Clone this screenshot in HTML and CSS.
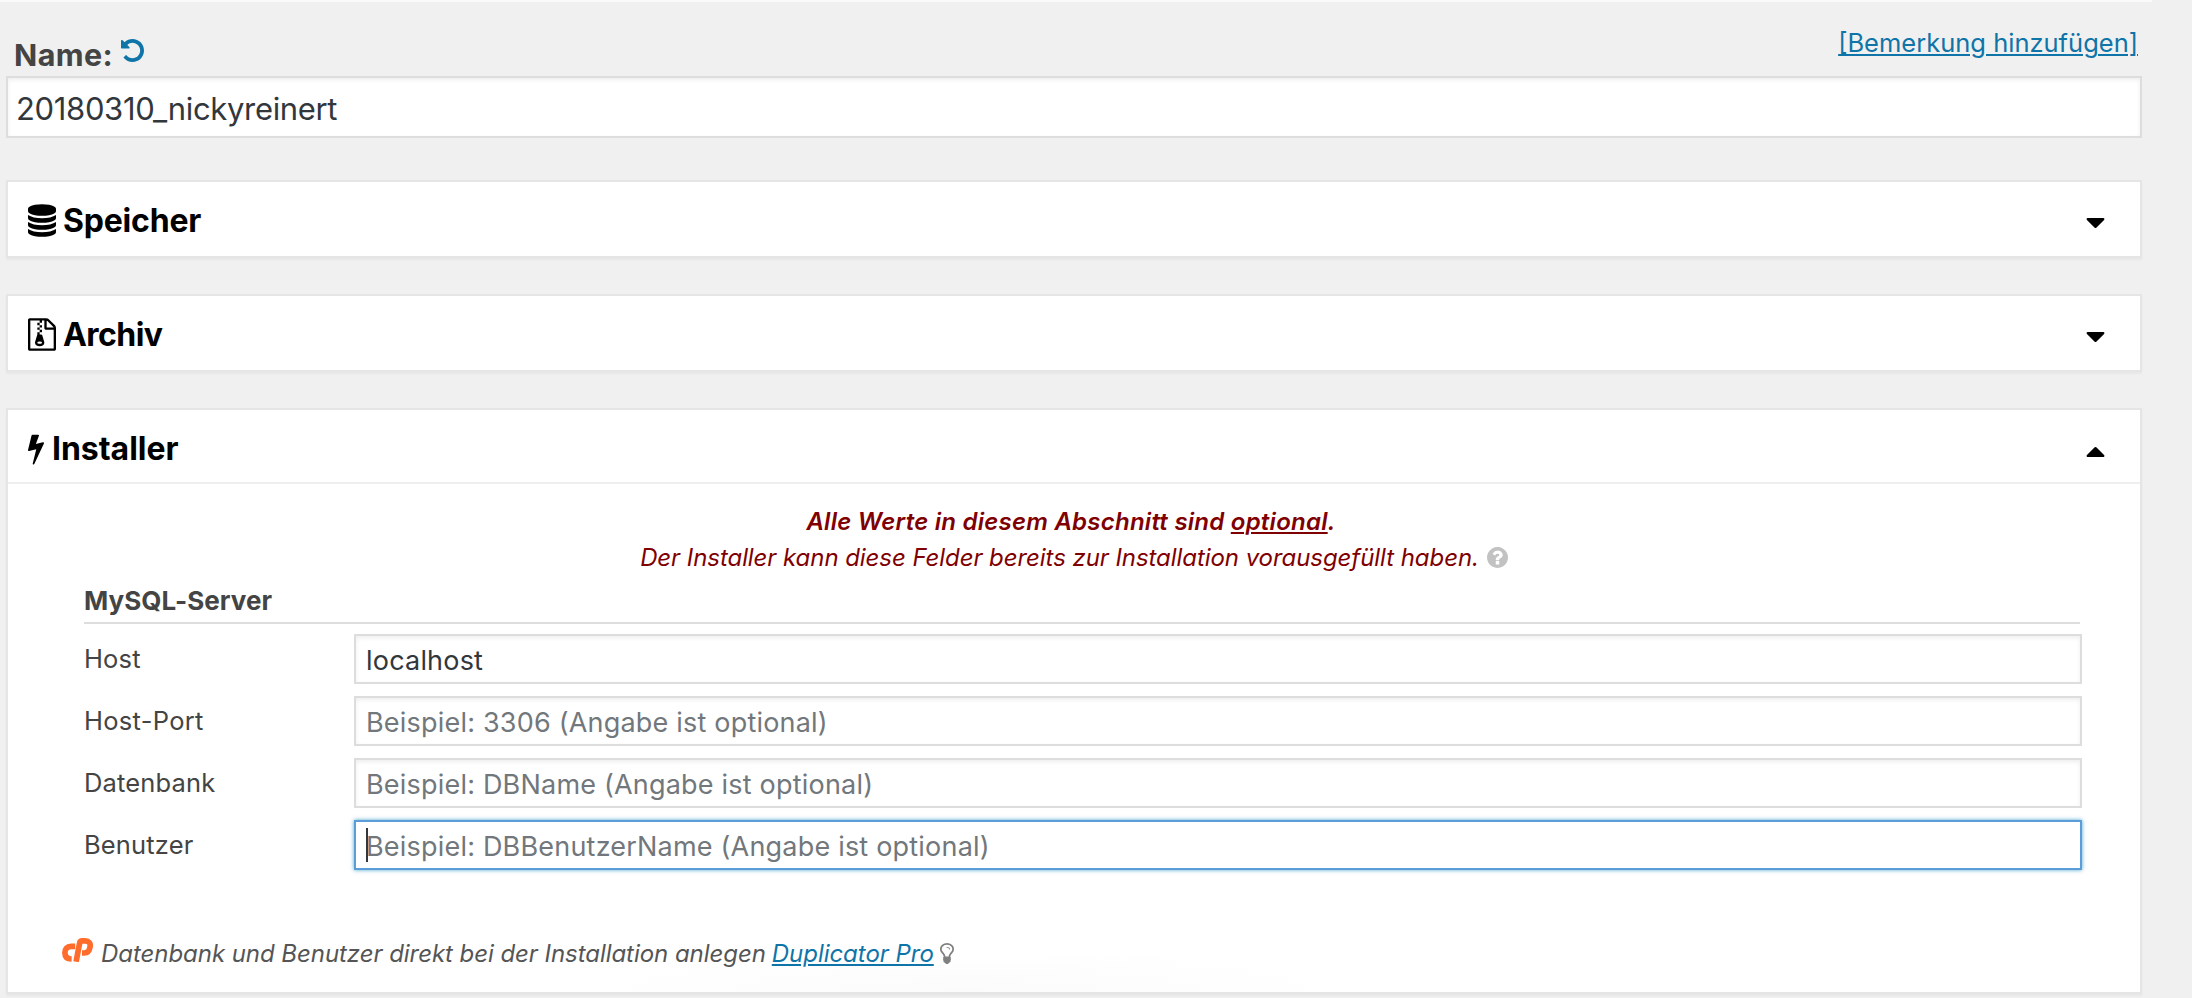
FILE: index.html
```html
<!DOCTYPE html>
<html lang="de">
<head>
<meta charset="utf-8">
<title>Paket erstellen</title>
<link rel="stylesheet" href="styles.css">
</head>
<body>
<main class="page">
  <header class="name-bar">
    <label class="name-label" for="name">Name:</label>
    <svg class="icon-undo" viewBox="128 128 1536 1536"><path d="M1664 896q0 156-61 298t-164 245-245 164-298 61q-172 0-327-72.5t-264-204.5q-7-10-6.5-22.5t8.5-20.5l137-138q10-9 25-9 16 2 23 12 73 95 179 147t225 52q104 0 198.5-40.5t163.5-109.5 109.5-163.5 40.5-198.5-40.5-198.5-109.5-163.5-163.5-109.5-198.5-40.5q-98 0-188 35.5t-160 101.5l137 138q31 30 14 69-17 40-59 40h-448q-26 0-45-19t-19-45v-448q0-42 40-59 39-17 69 14l130 129q107-101 244.5-156.5t284.5-55.5q156 0 298 61t245 164 164 245 61 298z"/></svg>
    <a class="link note-link">[Bemerkung hinzufügen]</a>
  </header>
  <input class="input name-input" id="name" type="text" value="20180310_nickyreinert">

  <section class="panel">
    <div class="panel-head">
      <svg class="head-icon" viewBox="128 0 1536 1792"><path d="M896 768q237 0 443-43t325-127v170q0 69-103 128t-280 93.5-385 34.5-385-34.5-280-93.5-103-128v-170q119 84 325 127t443 43zm0 768q237 0 443-43t325-127v170q0 69-103 128t-280 93.5-385 34.5-385-34.5-280-93.5-103-128v-170q119 84 325 127t443 43zm0-384q237 0 443-43t325-127v170q0 69-103 128t-280 93.5-385 34.5-385-34.5-280-93.5-103-128v-170q119 84 325 127t443 43zm0-1152q208 0 385 34.5t280 93.5 103 128v128q0 69-103 128t-280 93.5-385 34.5-385-34.5-280-93.5-103-128v-128q0-69 103-128t280-93.5 385-34.5z"/></svg>
      <h2 class="panel-title">Speicher</h2>
      <svg class="caret" viewBox="384 640 1024 576"><path d="M1408 704q0 26-19 45l-448 448q-19 19-45 19t-45-19l-448-448q-19-19-19-45t19-45 45-19h896q26 0 45 19t19 45z"/></svg>
    </div>
  </section>

  <section class="panel">
    <div class="panel-head">
      <svg class="head-icon" viewBox="0 0 1536 1792"><path d="M640 384v-128h-128v128h128zm128 128v-128h-128v128h128zm-128 128v-128h-128v128h128zm128 128v-128h-128v128h128zm700-388q28 28 48 76t20 88v1152q0 40-28 68t-68 28h-1344q-40 0-68-28t-28-68v-1600q0-40 28-68t68-28h896q40 0 88 20t76 48zm-444-244v376h376q-10-29-22-41l-313-313q-12-12-41-22zm384 1528v-1024h-416q-40 0-68-28t-28-68v-416h-128v128h-128v-128h-512v1536h1280zm-627-721l107 349q8 27 8 52 0 83-72.5 137.5t-183.5 54.5-183.5-54.5-72.5-137.5q0-25 8-52 21-63 120-396v-128h128v128h79q22 0 39 13t23 34zm-141 465q53 0 90.5-19t37.5-45-37.5-45-90.5-19-90.5 19-37.5 45 37.5 45 90.5 19z"/></svg>
      <h2 class="panel-title title-archive">Archiv</h2>
      <svg class="caret" viewBox="384 640 1024 576"><path d="M1408 704q0 26-19 45l-448 448q-19 19-45 19t-45-19l-448-448q-19-19-19-45t19-45 45-19h896q26 0 45 19t19 45z"/></svg>
    </div>
  </section>

  <section class="panel panel-open">
    <div class="panel-head head-open">
      <svg class="head-icon icon-bolt" viewBox="448 0 896 1792"><path d="M1333 566q18 20 7 44l-540 1157q-13 25-42 25-4 0-14-2-17-5-25.5-19t-4.5-30l197-808-406 101q-4 1-12 1-18 0-31-11-18-15-13-39l201-825q4-16 14-26t28-10h328q19 0 32 12.5t13 29.5q0 8-5 18l-171 463 396-98q8-2 12-2 19 0 34 15z"/></svg>
      <h2 class="panel-title title-installer">Installer</h2>
      <svg class="caret caret-up" viewBox="384 640 1024 576"><path d="M1408 1152q0 26-19 45t-45 19h-896q-26 0-45-19t-19-45 19-45l448-448q19-19 45-19t45 19l448 448q19 19 19 45z"/></svg>
    </div>
    <div class="panel-body">
      <p class="notice notice-strong">Alle Werte in diesem Abschnitt sind <u class="underlined">optional</u>.</p>
      <p class="notice"><span>Der Installer kann diese Felder bereits zur Installation vorausgefüllt haben.</span>
        <svg class="icon-help" viewBox="128 128 1536 1536"><path d="M1024 1376v-192q0-14-9-23t-23-9h-192q-14 0-23 9t-9 23v192q0 14 9 23t23 9h192q14 0 23-9t9-23zm256-672q0-88-55.5-163t-138.5-116-170-41q-243 0-371 213-15 24 8 42l132 100q7 6 19 6 16 0 25-12 53-68 86-92 34-24 86-24 48 0 85.5 26t37.5 59q0 38-20 61t-68 45q-63 28-115.5 86.5t-52.5 125.5v36q0 14 9 23t23 9h192q14 0 23-9t9-23q0-19 21.5-49.5t54.5-49.5q32-18 49-28.5t46-35 44.5-48 28-60.5 12.5-81zm384 192q0 209-103 385.5t-279.5 279.5-385.5 103-385.5-103-279.5-279.5-103-385.5 103-385.5 279.5-279.5 385.5-103 385.5 103 279.5 279.5 103 385.5z"/></svg>
      </p>
      <h3 class="group-title"><span>MySQL-Server</span></h3>
      <div class="fields">
        <label class="field-label" for="host">Host</label>
        <div class="field"><input class="input" id="host" type="text" value="localhost"></div>
        <label class="field-label label-port" for="port">Host-Port</label>
        <div class="field"><input class="input" id="port" type="text" placeholder="Beispiel: 3306 (Angabe ist optional)"></div>
        <label class="field-label" for="db">Datenbank</label>
        <div class="field"><input class="input" id="db" type="text" placeholder="Beispiel: DBName (Angabe ist optional)"></div>
        <label class="field-label" for="user">Benutzer</label>
        <div class="field"><input class="input input-active" id="user" type="text" placeholder="Beispiel: DBBenutzerName (Angabe ist optional)"><span class="text-caret"></span></div>
      </div>
      <div class="hint">
        <svg class="icon-cpanel" viewBox="0 0 31 24"><path d="M13.2 8.3H9C5 8.3 2.9 11 2.9 14.8C2.9 18.8 5 21 9.6 21M14.1 23.7L17.6 5.2C17.9 3.5 18.6 2.9 20.1 2.9H23.3C27 2.9 28.6 5.2 28.1 8.7C27.5 12.8 25.5 15 22.3 15H20"/></svg>
        <span class="hint-text">Datenbank und Benutzer direkt bei der Installation anlegen</span>
        <a class="link hint-link">Duplicator Pro</a>
        <svg class="icon-bulb" viewBox="384 128 1024 1536"><path d="M1120 576q0 13-9.5 22.5t-22.5 9.5-22.5-9.5-9.5-22.5q0-46-54-71t-106-25q-13 0-22.5-9.5t-9.5-22.5 9.5-22.5 22.5-9.5q50 0 99.5 16t87 54 37.5 90zm160 0q0-72-34.5-134t-90-101.5-123-62-136.5-22.5-136.5 22.5-123 62-90 101.5-34.5 134q0 101 68 180 10 11 30.5 33t30.5 33q128 153 141 298h228q13-145 141-298 10-11 30.5-33t30.5-33q68-79 68-180zm128 0q0 155-103 268-45 49-74.5 87t-59.5 95.5-34 107.5q47 28 47 82 0 37-25 64 25 27 25 64 0 52-45 81 13 23 13 47 0 46-31.5 71t-77.5 25q-20 44-60 70t-87 26-87-26-60-70q-46 0-77.5-25t-31.5-71q0-24 13-47-45-29-45-81 0-37 25-64-25-27-25-64 0-54 47-82-4-50-34-107.5t-59.5-95.5-74.5-87q-103-113-103-268 0-99 44.5-184.5t117-142 164-89 186.5-32.5 186.5 32.5 164 89 117 142 44.5 184.5z"/></svg>
      </div>
    </div>
  </section>
</main>
</body>
</html>
```
FILE: styles.css
```css
* { box-sizing: border-box; }

body {
  margin: 0;
  height: 998px;
  overflow: hidden;
  background: linear-gradient(#f9f9f9, #f9f9f9) 0 0 / 2152px 2px no-repeat #f0f0f0;
  color: #444;
  font-family: Inter, "Open Sans", sans-serif;
}

h2, h3, p { margin: 0; }
svg { display: block; flex: none; fill: currentColor; }

.page { width: 2142px; padding-left: 6px; }

.link {
  color: #0f74a8;
  text-decoration: underline;
  text-decoration-thickness: 2px;
  text-underline-offset: 2px;
  white-space: nowrap;
}

/* Name row */
.name-bar { display: flex; align-items: flex-start; height: 76px; padding: 0 4px 0 8px; }
.name-label { margin-top: 35px; font-size: 30.5px; line-height: 40px; font-weight: 650; letter-spacing: .4px; }
.icon-undo { width: 23px; height: 23px; margin: 39px 0 0 8px; color: #0f74a8; }
.note-link { margin: 28px 0 0 auto; font-size: 25.5px; line-height: 30px; }

.input {
  display: block;
  width: 100%;
  height: 50px;
  margin: 0;
  padding: 2px 9px 0 10px;
  border: 2px solid #ddd;
  border-radius: 0;
  outline: 0;
  background: #fff;
  box-shadow: inset 0 2px 4px rgba(0, 0, 0, .07);
  color: #32373c;
  font: 27px Inter, "Open Sans", sans-serif;
  letter-spacing: .2px;
}
.input::placeholder { color: #72777c; opacity: 1; }
.name-input { height: 62px; padding: 3px 8px 0; font-size: 31px; letter-spacing: -.34px; }
.input-active { border-color: #5b9dd9; box-shadow: 0 0 4px rgba(30, 140, 190, .8); }

/* Panels */
.panel {
  margin-top: 36px;
  border: 2px solid #e5e5e5;
  background: #fff;
  box-shadow: 0 2px 2px rgba(0, 0, 0, .04);
}
.name-input + .panel { margin-top: 42px; }
.panel-head { display: flex; align-items: flex-start; height: 74px; padding: 0 35px 0 20px; color: #000; }
.head-open { border-bottom: 2px solid #eee; }
.head-icon { width: 28px; height: 33px; margin: 22px 7px 0 0; }
.icon-bolt { width: 16px; margin: 22px 8px 0 0; }
.panel-title { margin-top: 5px; font-size: 32px; line-height: 67px; font-weight: 700; letter-spacing: -.2px; }
.title-archive { letter-spacing: -.55px; }
.title-installer { letter-spacing: -.02px; }
.caret { width: 19px; height: 10px; margin: 36px 0 0 auto; }
.caret-up { margin-top: 37px; }

.panel-body {
  height: 508px;
  padding-top: 20px;
  background: radial-gradient(ellipse 420px 44px at 45% 100%, #fbfbfb, #fff);
}
.notice {
  display: flex;
  justify-content: center;
  height: 36px;
  color: #7f0000;
  font-size: 24px;
  line-height: 36px;
  font-style: italic;
  letter-spacing: -.065px;
}
.notice-strong { display: block; padding-right: 6px; font-weight: 600; letter-spacing: .24px; text-align: center; }
.underlined { text-decoration-thickness: 2px; text-underline-offset: 2px; }
.icon-help { width: 21px; height: 21px; margin: 7px 0 0 8px; color: #c2c2c2; }

/* Connection fields */
.group-title {
  width: 1996px;
  margin: 7px 0 10px 76px;
  padding-bottom: 3px;
  border-bottom: 2px solid #ddd;
  font-size: 26px;
  line-height: 36px;
  font-weight: 700;
  letter-spacing: .05px;
}
.fields { display: grid; grid-template-columns: 270px 1728px; row-gap: 12px; margin-left: 76px; }
.field { position: relative; }
.field-label { font-size: 25.5px; line-height: 50px; letter-spacing: .15px; }
.label-port { letter-spacing: .3px; }
.text-caret { position: absolute; left: 12px; top: 8px; width: 2px; height: 34px; background: #32373c; }

.hint { display: flex; height: 36px; margin: 66px 0 0 54px; font-size: 24px; line-height: 36px; font-style: italic; color: #555; }
.icon-cpanel { width: 31px; height: 24px; margin: 2px 8px 0 0; fill: none; stroke: #ff6c2c; stroke-width: 5.7; }
.hint-text { letter-spacing: -.055px; white-space: nowrap; }
.hint-link { margin-left: 6px; letter-spacing: -.04px; }
.icon-bulb { width: 14px; height: 21px; margin: 7px 0 0 6px; color: #808080; }
```
